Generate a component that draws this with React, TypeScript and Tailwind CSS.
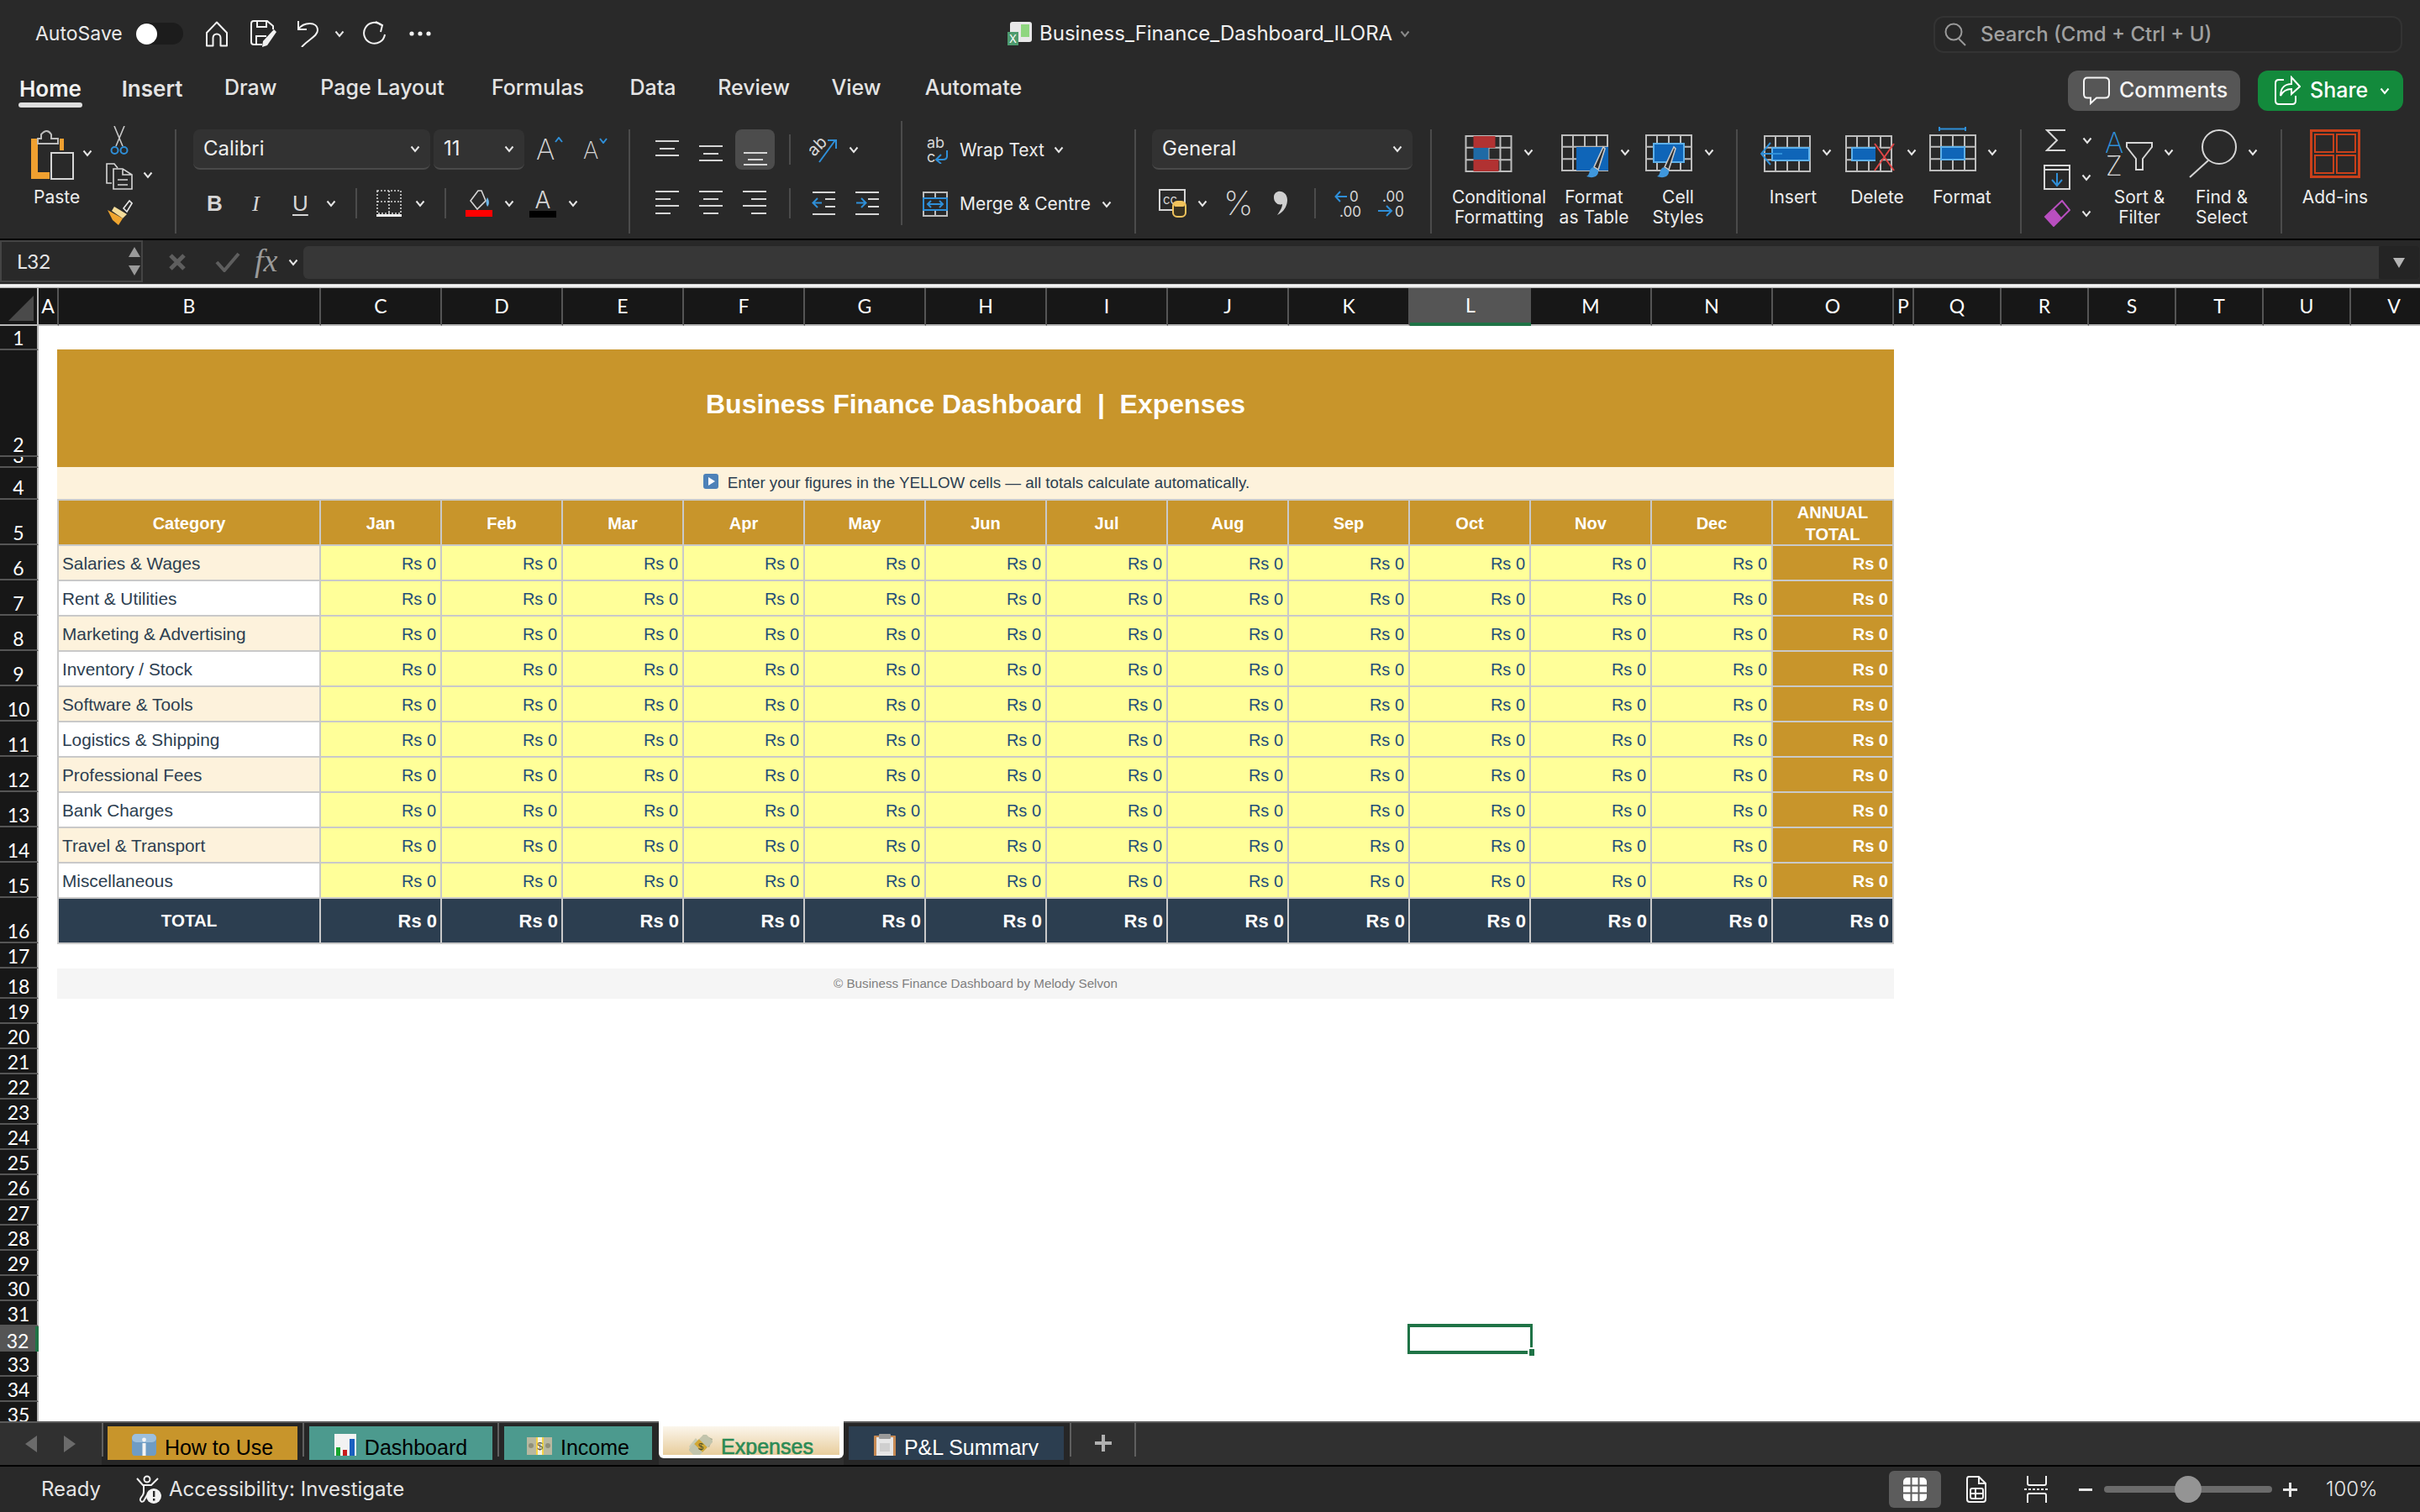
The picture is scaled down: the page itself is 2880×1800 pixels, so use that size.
import React from "react"

// ─── DATA ────────────────────────────────────────────────

const MONTHS = ["Jan", "Feb", "Mar", "Apr", "May", "Jun", "Jul", "Aug", "Sep", "Oct", "Nov", "Dec"]

const CATEGORIES = [
  "Salaries & Wages",
  "Rent & Utilities",
  "Marketing & Advertising",
  "Inventory / Stock",
  "Software & Tools",
  "Logistics & Shipping",
  "Professional Fees",
  "Bank Charges",
  "Travel & Transport",
  "Miscellaneous",
]

const LINE = "#d6d6d6"
const BLUE = "#2f8fd8"

// ─── SMALL PIECES ────────────────────────────────────────

function Chev({ className = "", color = "#e6e6e6" }: { className?: string; color?: string }) {
  return (
    <svg width="12" height="9" viewBox="0 0 12 9" className={"shrink-0 " + className}>
      <path d="M1.5 1.5 L6 7 L10.5 1.5" fill="none" stroke={color} strokeWidth="2" />
    </svg>
  )
}

function Sep({ className = "" }: { className?: string }) {
  return <div className={"w-[2px] h-[124px] shrink-0 bg-[#4b4b4b] " + className} />
}

function MiniSep({ className = "" }: { className?: string }) {
  return <div className={"w-[2px] h-[36px] shrink-0 bg-[#4b4b4b] " + className} />
}

function Lines({ ys, ws, align, className = "" }: { ys: number[]; ws: number[]; align: "l" | "c" | "r"; className?: string }) {
  return (
    <svg width="28" height="38" viewBox="0 0 28 38" className={"shrink-0 " + className}>
      {ys.map((y, i) => {
        const x = align === "l" ? 0 : align === "r" ? 28 - ws[i] : (28 - ws[i]) / 2
        return <rect key={i} x={x} y={y} width={ws[i]} height="2" fill={LINE} />
      })}
    </svg>
  )
}

function Grid({ w = 56, h = 44, rows = 3, cols = 4, color = "#bdbdbd" }: { w?: number; h?: number; rows?: number; cols?: number; color?: string }) {
  const lines = []
  for (let i = 1; i < cols; i++) lines.push(<line key={"c" + i} x1={(w / cols) * i} y1="1" x2={(w / cols) * i} y2={h - 1} stroke={color} strokeWidth="2" />)
  for (let i = 1; i < rows; i++) lines.push(<line key={"r" + i} x1="1" y1={(h / rows) * i} x2={w - 1} y2={(h / rows) * i} stroke={color} strokeWidth="2" />)
  return (
    <g>
      <rect x="1" y="1" width={w - 2} height={h - 2} fill="none" stroke={color} strokeWidth="2" />
      {lines}
    </g>
  )
}

function Brush({ x, y }: { x: number; y: number }) {
  return (
    <g transform={`translate(${x} ${y})`}>
      <path d="M20 1 L9 25 L14 28 L22 3 Z" fill="#2b2b2b" stroke="#c9c9c9" strokeWidth="1.6" />
      <path d="M8 25 C2 27 5 34 0 36 C8 39 15 36 14 29 Z" fill="#3f97dc" />
    </g>
  )
}

// Big ribbon button: icon + chevron on top, label below
function BigBtn({ className, pad, icon, l1, l2, chev = true }: { className: string; pad: string; icon: React.ReactNode; l1: string; l2?: string; chev?: boolean }) {
  return (
    <div className={"flex flex-col shrink-0 " + className}>
      <div className={"flex items-center h-[69px] " + pad}>
        {icon}
        {chev && <Chev className="ml-[13px] -mt-[14px]" />}
      </div>
      <div className="text-center text-[21px] leading-[24px] text-[#ededed] whitespace-nowrap">
        <div>{l1}</div>
        {l2 && <div>{l2}</div>}
      </div>
    </div>
  )
}

function SheetTab({ className, text, icon, bg }: { className: string; text: string; icon: React.ReactNode; bg: string }) {
  return (
    <div className={"h-[40px] mt-[4px] shrink-0 " + className + " " + bg}>
      <div className="h-[35px] overflow-hidden flex justify-center gap-[10px] pt-[11px]">
        {icon}
        <span className="text-[25px] leading-[28px] font-[family-name:'Liberation_Sans',Arial,sans-serif] whitespace-nowrap">{text}</span>
      </div>
    </div>
  )
}

// ─── TOP BARS ────────────────────────────────────────────

function TitleBar() {
  return (
    <div className="h-[80px] flex items-center shrink-0 text-[#e9e9e9]">
      <span className="ml-[42px] w-[100px] text-[23px] whitespace-nowrap">AutoSave</span>
      <div className="ml-[20px] w-[56px] h-[26px] rounded-full bg-[#1c1c1c] flex items-center">
        <div className="w-[25px] h-[25px] rounded-full bg-white" />
      </div>
      <svg width="28" height="31" viewBox="0 0 28 31" className="ml-[26px] shrink-0">
        <path d="M2 14 L14 1.5 L26 14 V29.5 H18.5 V20 a4.5 4.5 0 0 0 -9 0 V29.5 H2 Z" fill="none" stroke="#f2f2f2" strokeWidth="2" strokeLinejoin="round" />
      </svg>
      <svg width="32" height="32" viewBox="0 0 32 32" className="ml-[26px] shrink-0">
        <path d="M14 29 H4 Q1 29 1 26 V4 Q1 1 4 1 H20 L27 7 V11" fill="none" stroke="#f2f2f2" strokeWidth="2" />
        <path d="M8 1 V8 H19 V1 M7 29 V19 H19" fill="none" stroke="#f2f2f2" strokeWidth="2" />
        <path d="M28 11 L31 14 L20 30 L14 32 L15 25 Z" fill="#f2f2f2" />
      </svg>
      <svg width="27" height="32" viewBox="0 0 27 32" className="ml-[23px] shrink-0">
        <path d="M2 1 V11 H12 M2 11 C8 2 25 1 25 12 C25 19 14 23 6 32" fill="none" stroke="#f2f2f2" strokeWidth="2" />
      </svg>
      <Chev className="ml-[18px]" />
      <svg width="28" height="30" viewBox="0 0 28 30" className="ml-[22px] shrink-0">
        <path d="M22 5 A12.5 12.5 0 1 0 26 16" fill="none" stroke="#f2f2f2" strokeWidth="2" />
        <path d="M15 1 L23 5 L21 13" fill="none" stroke="#f2f2f2" strokeWidth="2" />
      </svg>
      <svg width="26" height="6" viewBox="0 0 26 6" className="ml-[27px] shrink-0">
        <circle cx="3" cy="3" r="2.6" fill="#f2f2f2" />
        <circle cx="13" cy="3" r="2.6" fill="#f2f2f2" />
        <circle cx="23" cy="3" r="2.6" fill="#f2f2f2" />
      </svg>
      {/* Document title */}
      <div className="ml-[686px] w-[29px] h-[28px] relative shrink-0">
        <div className="absolute left-[3px] top-0 w-[26px] h-[24px] rounded-[3px] bg-[#e8e8e8]">
          <div className="ml-[13px] mt-[3px] w-[10px] h-[15px] bg-[#8fd67f]" />
        </div>
        <div className="absolute left-0 bottom-0 w-[13px] h-[16px] bg-[#4e9a6e] text-white text-[13px] leading-[16px] text-center">X</div>
      </div>
      <span className="ml-[9px] w-[421px] text-[24px] whitespace-nowrap text-[#f0f0f0]">Business_Finance_Dashboard_ILORA</span>
      <Chev className="ml-[8px]" color="#8a8a8a" />
      {/* Search */}
      <div className="ml-[623px] mt-[2px] w-[558px] h-[44px] rounded-[12px] border-2 border-[#333333] bg-[#272727] flex items-center shrink-0">
        <svg width="28" height="30" viewBox="0 0 28 30" className="ml-[11px] shrink-0">
          <circle cx="11" cy="12" r="9.5" fill="none" stroke="#9a9a9a" strokeWidth="2" />
          <path d="M17 20 L25 28" stroke="#9a9a9a" strokeWidth="2" />
        </svg>
        <span className="ml-[15px] text-[24px] font-medium text-[#a0a0a0] whitespace-nowrap">Search (Cmd + Ctrl + U)</span>
      </div>
    </div>
  )
}

function TabsBar() {
  const tab = "shrink-0 text-center text-[25px] font-medium text-[#e4e4e4] whitespace-nowrap mb-[6px]"
  return (
    <div className="h-[56px] flex items-center shrink-0">
      <div className="relative ml-[22px] w-[76px] shrink-0 text-center text-[26px] font-semibold text-[#f2f2f2] mb-[6px]">
        Home
        <div className="absolute left-0 right-0 top-[36px] h-[6px] rounded-full bg-[#dedede]" />
      </div>
      <span className="ml-[45px] w-[76px] shrink-0 text-center text-[26px] font-semibold text-[#e4e4e4] whitespace-nowrap mb-[6px]">Insert</span>
      <span className={"ml-[48px] w-[62px] " + tab}>Draw</span>
      <span className={"ml-[50px] w-[152px] " + tab}>Page Layout</span>
      <span className={"ml-[52px] w-[114px] " + tab}>Formulas</span>
      <span className={"ml-[52px] w-[56px] " + tab}>Data</span>
      <span className={"ml-[48px] w-[88px] " + tab}>Review</span>
      <span className={"ml-[48px] w-[60px] " + tab}>View</span>
      <span className={"ml-[50px] w-[119px] " + tab}>Automate</span>
      <div className="ml-[1243px] w-[205px] h-[48px] rounded-[12px] bg-[#565656] flex items-center shrink-0">
        <svg width="34" height="34" viewBox="0 0 34 34" className="ml-[17px] shrink-0">
          <path d="M6 1.5 H27 Q32 1.5 32 6 V21 Q32 25.5 27 25.5 H17 L10 32 V25.5 H6 Q2 25.5 2 21 V6 Q2 1.5 6 1.5 Z" fill="none" stroke="#f4f4f4" strokeWidth="2" />
        </svg>
        <span className="ml-[10px] text-[25px] font-medium text-[#f4f4f4] whitespace-nowrap">Comments</span>
      </div>
      <div className="ml-[21px] w-[173px] h-[48px] rounded-[12px] bg-[#138a3c] flex items-center shrink-0">
        <svg width="32" height="36" viewBox="0 0 32 36" className="ml-[19px] shrink-0">
          <path d="M12 5 H6 Q2 5 2 9 V30 Q2 34 6 34 H22 Q26 34 26 30 V24" fill="none" stroke="#fff" strokeWidth="2" />
          <path d="M8 24 C8 14 14 10 21 10 V2 L31 13 L21 22 V16 C15 16 11 18 8 24 Z" fill="none" stroke="#fff" strokeWidth="2" />
        </svg>
        <span className="ml-[11px] text-[25px] font-medium text-white">Share</span>
        <Chev className="ml-[14px]" color="#ffffff" />
      </div>
    </div>
  )
}

// ─── RIBBON ──────────────────────────────────────────────

function ClipboardGroup() {
  return (
    <div className="w-[208px] shrink-0 flex">
      <div className="ml-[35px] w-[80px] shrink-0">
        <div className="flex items-center h-[62px]">
          <svg width="53" height="60" viewBox="0 0 53 60" className="shrink-0">
            <path d="M2 10 H10 V50 H24 V58 H2 Z" fill="#f0a030" />
            <path d="M10 10 H14 V5 Q21 -3 26 5 V10 H34 V16 H10 Z" fill="#292929" stroke="#bdbdbd" strokeWidth="2" />
            <path d="M36 10 H41 V24 H36 Z" fill="#f0a030" />
            <rect x="26" y="27" width="26" height="31" fill="#292929" stroke="#d6d6d6" strokeWidth="2" />
          </svg>
          <Chev className="ml-[10px] -mt-[6px]" />
        </div>
        <div className="ml-[5px] mt-[6px] text-[21px] leading-[26px] text-[#ededed]">Paste</div>
      </div>
      <div className="ml-[11px] shrink-0 flex flex-col">
        <svg width="24" height="34" viewBox="0 0 24 34" className="-mt-[4px] ml-[4px]">
          <path d="M6 0 L16 24 M18 0 L8 24" stroke="#c9c9c9" strokeWidth="1.6" />
          <circle cx="6.5" cy="29" r="4" fill="none" stroke={BLUE} strokeWidth="2" />
          <circle cx="17.5" cy="29" r="4" fill="none" stroke={BLUE} strokeWidth="2" />
        </svg>
        <div className="flex items-center mt-[10px] h-[32px]">
          <svg width="32" height="32" viewBox="0 0 32 32" className="shrink-0">
            <path d="M7 24 H1 V1 H10 L14 6" fill="none" stroke="#d6d6d6" strokeWidth="1.6" />
            <path d="M9 7 H20 L31 14 V31 H9 Z M20 8 V14 H30 M14 20 H26 M14 26 H26" fill="#292929" stroke="#d6d6d6" strokeWidth="1.6" />
          </svg>
          <Chev className="ml-[12px] -mt-[4px]" />
        </div>
        <svg width="32" height="30" viewBox="0 0 32 30" className="mt-[12px]">
          <path d="M21 10 L28 1 L31 4 L25 14 Z" fill="#292929" stroke="#e8e8e8" strokeWidth="1.6" />
          <path d="M10 8 L25 17 L20 22 L7 13 Z" fill="#f4dc9a" />
          <path d="M2 12 L20 22 L15 30 L8 24 Z" fill="#efa530" />
        </svg>
      </div>
    </div>
  )
}

function FontGroup() {
  return (
    <div className="w-[538px] shrink-0">
      <div className="flex items-center h-[48px]">
        <div className="ml-[20px] w-[282px] h-[48px] rounded-[8px] bg-[#323232] border-b-2 border-[#4a4a4a] flex items-center justify-between px-[12px]">
          <span className="text-[24px] text-[#ededed]">Calibri</span>
          <Chev />
        </div>
        <div className="ml-[4px] w-[108px] h-[48px] rounded-[8px] bg-[#323232] border-b-2 border-[#4a4a4a] flex items-center justify-between px-[12px]">
          <span className="text-[24px] text-[#ededed]">11</span>
          <Chev />
        </div>
        <div className="ml-[14px] w-[30px] h-[34px] flex items-start relative">
          <span className="text-[34px] leading-[34px] font-extralight text-[#d6d6d6]">A</span>
          <svg width="10" height="7" viewBox="0 0 10 7" className="absolute -right-[2px] top-[2px]"><path d="M1 6 L5 1 L9 6" fill="none" stroke={BLUE} strokeWidth="2" /></svg>
        </div>
        <div className="ml-[26px] w-[26px] h-[32px] flex items-start relative">
          <span className="text-[28px] leading-[34px] font-extralight text-[#d6d6d6]">A</span>
          <svg width="10" height="7" viewBox="0 0 10 7" className="absolute -right-[3px] top-[2px]"><path d="M1 1 L5 6 L9 1" fill="none" stroke={BLUE} strokeWidth="2" /></svg>
        </div>
      </div>
      <div className="flex items-center h-[48px] mt-[16px] text-[#d6d6d6]">
        <span className="ml-[36px] w-[16px] text-[26px] font-bold font-[family-name:'Liberation_Sans',sans-serif]">B</span>
        <span className="ml-[38px] w-[12px] text-[26px] italic font-[family-name:'Liberation_Serif',serif]">I</span>
        <span className="ml-[36px] w-[18px] text-[26px] underline underline-offset-[4px] font-[family-name:'Liberation_Sans',sans-serif]">U</span>
        <Chev className="ml-[22px]" />
        <MiniSep className="ml-[23px]" />
        <svg width="30" height="32" viewBox="0 0 30 32" className="ml-[23px] shrink-0">
          <rect x="1" y="1" width="28" height="27" fill="none" stroke="#d6d6d6" strokeWidth="1.6" strokeDasharray="2 2" />
          <path d="M15 1 V28 M1 14 H29" stroke="#d6d6d6" strokeWidth="1.6" strokeDasharray="2 2" />
          <rect x="0" y="29" width="30" height="3" fill="#f2f2f2" />
        </svg>
        <Chev className="ml-[16px]" />
        <MiniSep className="ml-[23px]" />
        <div className="ml-[23px] w-[32px] shrink-0 flex flex-col items-center">
          <svg width="26" height="24" viewBox="0 0 26 24">
            <path d="M12 1 L16 1 L21 13 L11 23 L3 13 Z" fill="none" stroke="#d6d6d6" strokeWidth="1.6" />
            <path d="M23 9 C26 14 25 18 23 20 C21 17 21 12 23 9 Z" fill="#6cb6ea" />
          </svg>
          <div className="w-[32px] h-[8px] bg-[#ff0000]" />
        </div>
        <Chev className="ml-[14px]" />
        <div className="ml-[18px] w-[32px] shrink-0 flex flex-col items-center">
          <span className="text-[28px] leading-[26px] font-light text-[#d6d6d6]">A</span>
          <div className="w-[32px] h-[8px] bg-black" />
        </div>
        <Chev className="ml-[14px]" />
      </div>
    </div>
  )
}

function AlignGroup() {
  return (
    <div className="w-[322px] shrink-0">
      <div className="flex items-center h-[48px]">
        <Lines className="ml-[30px]" ys={[8, 17, 25]} ws={[28, 18, 28]} align="c" />
        <Lines className="ml-[24px]" ys={[14, 23, 31]} ws={[28, 18, 28]} align="c" />
        <div className="ml-[15px] w-[47px] h-[48px] rounded-[8px] bg-[#4c4c4c] flex items-center justify-center">
          <Lines ys={[22, 30, 36]} ws={[28, 18, 28]} align="c" />
        </div>
        <MiniSep className="ml-[17px]" />
        <svg width="34" height="34" viewBox="0 0 34 34" className="ml-[22px] shrink-0">
          <text x="0" y="20" transform="rotate(-45 10 16)" fontSize="20" fill="#d6d6d6" fontFamily="Inter, sans-serif">ab</text>
          <path d="M12 32 L31 6 M22 6 H32 V16" fill="none" stroke={BLUE} strokeWidth="2" />
        </svg>
        <Chev className="ml-[13px]" />
      </div>
      <div className="flex items-center h-[48px] mt-[16px]">
        <Lines className="ml-[30px]" ys={[4, 13, 21, 30]} ws={[28, 18, 28, 18]} align="l" />
        <Lines className="ml-[24px]" ys={[4, 13, 21, 30]} ws={[28, 18, 28, 18]} align="c" />
        <Lines className="ml-[24px]" ys={[4, 13, 21, 30]} ws={[28, 18, 28, 18]} align="r" />
        <MiniSep className="ml-[27px]" />
        <svg width="29" height="32" viewBox="0 0 29 32" className="ml-[25px] shrink-0">
          <path d="M1 3 H28 M16 11 H28 M16 20 H28 M1 29 H28" stroke={LINE} strokeWidth="2" />
          <path d="M12 15.5 H2 M7 10 L1.5 15.5 L7 21" fill="none" stroke={BLUE} strokeWidth="2" />
        </svg>
        <svg width="28" height="32" viewBox="0 0 28 32" className="ml-[23px] shrink-0">
          <path d="M0 3 H28 M15 11 H28 M15 20 H28 M0 29 H28" stroke={LINE} strokeWidth="2" />
          <path d="M1 15.5 H12 M7 10 L12.5 15.5 L7 21" fill="none" stroke={BLUE} strokeWidth="2" />
        </svg>
      </div>
    </div>
  )
}

function WrapGroup() {
  return (
    <div className="w-[276px] shrink-0">
      <div className="flex items-center h-[48px] pt-[1px]">
        <svg width="27" height="32" viewBox="0 0 27 32" className="ml-[29px] shrink-0">
          <text x="0" y="13" fontSize="18" fill="#d6d6d6" fontFamily="Inter, sans-serif">ab</text>
          <text x="0" y="30" fontSize="18" fill="#d6d6d6" fontFamily="Inter, sans-serif">c</text>
          <path d="M24 16 V23 Q24 27 19 27 H12 M17 21 L11 27 L17 32" fill="none" stroke={BLUE} strokeWidth="2" />
        </svg>
        <span className="ml-[12px] w-[101px] text-[21px] text-[#ededed] whitespace-nowrap">Wrap Text</span>
        <Chev className="ml-[11px]" />
      </div>
      <div className="flex items-center h-[48px] mt-[17px]">
        <svg width="30" height="30" viewBox="0 0 30 30" className="ml-[24px] shrink-0">
          <rect x="1" y="1" width="28" height="28" fill="none" stroke="#bdbdbd" strokeWidth="2" />
          <path d="M15 1 V8 M15 22 V29" stroke="#bdbdbd" strokeWidth="2" />
          <rect x="1" y="8" width="28" height="14" fill="#292929" stroke={BLUE} strokeWidth="2" />
          <path d="M6 15 H24 M10 11 L6 15 L10 19 M20 11 L24 15 L20 19" fill="none" stroke={BLUE} strokeWidth="2" />
        </svg>
        <span className="ml-[14px] w-[158px] text-[21px] text-[#ededed] whitespace-nowrap">Merge &amp; Centre</span>
        <Chev className="ml-[11px]" />
      </div>
    </div>
  )
}

function NumberGroup() {
  return (
    <div className="w-[350px] shrink-0">
      <div className="ml-[19px] w-[310px] h-[48px] rounded-[8px] bg-[#323232] border-b-2 border-[#4a4a4a] flex items-center justify-between px-[12px]">
        <span className="text-[24px] text-[#ededed]">General</span>
        <Chev />
      </div>
      <div className="flex items-center h-[48px] mt-[16px]">
        <svg width="33" height="34" viewBox="0 0 33 34" className="ml-[27px] shrink-0">
          <rect x="1" y="1" width="30" height="24" fill="none" stroke="#d6d6d6" strokeWidth="2" />
          <text x="5" y="18" fontSize="15" fill="#d6d6d6" fontFamily="Inter, sans-serif">cc</text>
          <rect x="17" y="15" width="15" height="18" rx="5" fill="#3a3220" stroke="#f2c35c" strokeWidth="2" />
          <rect x="18" y="16" width="13" height="5" rx="2" fill="#f2c35c" />
        </svg>
        <Chev className="ml-[13px]" />
        <span className="ml-[19px] w-[30px] text-[40px] leading-[44px] font-extralight text-[#d6d6d6]">%</span>
        <svg width="18" height="30" viewBox="0 0 18 30" className="ml-[29px] shrink-0">
          <path d="M6 1 C12 0 17 4 17 11 C17 19 12 26 5 29 C9 23 11 20 11 16 C6 18 1 14 1 8 C1 4 3 2 6 1 Z" fill="#cfcfcf" />
        </svg>
        <MiniSep className="ml-[31px]" />
        <svg width="32" height="34" viewBox="0 0 32 34" className="ml-[22px] shrink-0">
          <text x="18" y="15" fontSize="17" fill="#d6d6d6" fontFamily="Inter, sans-serif">0</text>
          <text x="6" y="33" fontSize="17" fill="#d6d6d6" fontFamily="Inter, sans-serif">.00</text>
          <path d="M15 9 H2 M7 3 L1.5 9 L7 15" fill="none" stroke={BLUE} strokeWidth="2" />
        </svg>
        <svg width="32" height="34" viewBox="0 0 32 34" className="ml-[20px] shrink-0">
          <text x="5" y="15" fontSize="17" fill="#d6d6d6" fontFamily="Inter, sans-serif">.00</text>
          <text x="20" y="33" fontSize="17" fill="#d6d6d6" fontFamily="Inter, sans-serif">0</text>
          <path d="M0 26 H15 M10 20 L16 26 L10 32" fill="none" stroke={BLUE} strokeWidth="2" />
        </svg>
      </div>
    </div>
  )
}

function StylesGroup() {
  return (
    <div className="w-[362px] shrink-0 flex pl-[20px]">
      <BigBtn
        className="w-[120px]"
        pad="ml-[19px]"
        l1="Conditional"
        l2="Formatting"
        icon={
          <svg width="57" height="44" viewBox="0 0 56 44" className="shrink-0 -mt-[12px]">
            <Grid />
            <rect x="10" y="1" width="26" height="14" fill="#b13232" />
            <rect x="10" y="15" width="18" height="14" fill="#1f6aa5" />
            <rect x="10" y="29" width="30" height="14" fill="#b13232" />
          </svg>
        }
      />
      <BigBtn
        className="w-[106px]"
        pad="ml-[14px]"
        l1="Format"
        l2="as Table"
        icon={
          <svg width="57" height="54" viewBox="0 0 57 54" className="shrink-0 -mt-[3px]">
            <Grid />
            <rect x="18" y="15" width="38" height="28" fill="#0f65b8" />
            <Brush x={30} y={14} />
          </svg>
        }
      />
      <BigBtn
        className="w-[94px]"
        pad="ml-[8px]"
        l1="Cell"
        l2="Styles"
        icon={
          <svg width="57" height="54" viewBox="0 0 57 54" className="shrink-0 -mt-[3px]">
            <Grid />
            <rect x="10" y="11" width="36" height="22" fill="#0f65b8" stroke="#5db0ea" strokeWidth="2" />
            <Brush x={14} y={14} />
          </svg>
        }
      />
    </div>
  )
}

function CellsGroup() {
  return (
    <div className="w-[336px] shrink-0 flex pl-[16px]">
      <BigBtn
        className="w-[100px]"
        pad="ml-[11px]"
        l1="Insert"
        icon={
          <svg width="60" height="44" viewBox="0 0 60 44" className="shrink-0 -mt-[12px]">
            <g transform="translate(4 0)"><Grid /></g>
            <rect x="14" y="15" width="44" height="15" fill="#0f65b8" stroke="#5db0ea" strokeWidth="2" />
            <path d="M26 22 H2 M12 9 L1 22 L12 35" fill="none" stroke={BLUE} strokeWidth="2" />
          </svg>
        }
      />
      <BigBtn
        className="w-[100px]"
        pad="ml-[12px]"
        l1="Delete"
        icon={
          <svg width="60" height="44" viewBox="0 0 60 44" className="shrink-0 -mt-[12px]">
            <Grid />
            <rect x="8" y="15" width="30" height="15" fill="#0f65b8" stroke="#5db0ea" strokeWidth="2" />
            <path d="M36 11 L50 22 L36 35 Z" fill="#292929" />
            <path d="M35 10 L58 42 M58 10 L35 42" stroke="#e04646" strokeWidth="2" />
          </svg>
        }
      />
      <BigBtn
        className="w-[102px]"
        pad="ml-[12px]"
        l1="Format"
        icon={
          <svg width="56" height="54" viewBox="0 0 56 54" className="shrink-0 -mt-[23px]">
            <path d="M12 1 V6 M43 1 V6 M12 3.5 H43" stroke={BLUE} strokeWidth="2" fill="none" />
            <g transform="translate(0 10)">
              <Grid />
              <rect x="14" y="15" width="28" height="15" fill="#0f65b8" stroke="#5db0ea" strokeWidth="2" />
            </g>
          </svg>
        }
      />
    </div>
  )
}

function EditGroup() {
  return (
    <div className="w-[308px] shrink-0 flex pl-[26px]">
      <div className="w-[64px] shrink-0 flex flex-col">
        <div className="flex items-center h-[30px] -mt-[2px]">
          <svg width="28" height="28" viewBox="0 0 28 28" className="ml-[2px] shrink-0">
            <path d="M24 2 H2 L14 14 L2 26 H24" fill="none" stroke="#d6d6d6" strokeWidth="2" />
          </svg>
          <Chev className="ml-[16px]" />
        </div>
        <div className="flex items-center h-[30px] mt-[14px]">
          <svg width="32" height="30" viewBox="0 0 32 30" className="shrink-0">
            <rect x="1" y="1" width="30" height="28" fill="none" stroke="#d6d6d6" strokeWidth="2" />
            <path d="M1 6 H31" stroke="#d6d6d6" strokeWidth="2" />
            <path d="M16 10 V24 M10 18 L16 25 L22 18" fill="none" stroke={BLUE} strokeWidth="2" />
          </svg>
          <Chev className="ml-[13px]" />
        </div>
        <div className="flex items-center h-[32px] mt-[12px]">
          <svg width="32" height="32" viewBox="0 0 32 32" className="shrink-0">
            <path d="M22 1 L31 12 L12 31 L2 20 Z" fill="none" stroke="#b94fc0" strokeWidth="2" />
            <path d="M13 11 L22 22 L12 31 L2 20 Z" fill="#b94fc0" />
          </svg>
          <Chev className="ml-[13px]" />
        </div>
      </div>
      <BigBtn
        className="w-[100px]"
        pad="ml-[10px]"
        l1="Sort &"
        l2="Filter"
        icon={
          <svg width="56" height="56" viewBox="0 0 56 56" className="shrink-0 -mt-[8px]">
            <text x="-1" y="25" fontSize="34" fontWeight="200" fill={BLUE} fontFamily="Inter, sans-serif">A</text>
            <text x="0" y="52" fontSize="32" fontWeight="200" fill="#d6d6d6" fontFamily="Inter, sans-serif">Z</text>
            <path d="M25 13 H55 V18 L44 32 V45 H36 V32 L25 18 Z" fill="none" stroke="#d6d6d6" strokeWidth="2" />
          </svg>
        }
      />
      <BigBtn
        className="w-[96px]"
        pad="ml-[8px]"
        l1="Find &"
        l2="Select"
        icon={
          <svg width="58" height="58" viewBox="0 0 58 58" className="shrink-0 -mt-[11px]">
            <ellipse cx="37" cy="21" rx="20" ry="20" fill="none" stroke="#d6d6d6" strokeWidth="2" />
            <path d="M24 37 L2 57" stroke="#d6d6d6" strokeWidth="2" />
          </svg>
        }
      />
    </div>
  )
}

function Ribbon() {
  return (
    <div className="h-[148px] pt-[18px] flex shrink-0 text-[#ededed]">
      <ClipboardGroup />
      <Sep />
      <FontGroup />
      <Sep />
      <AlignGroup />
      <Sep className="-mt-[10px]" />
      <WrapGroup />
      <Sep />
      <NumberGroup />
      <Sep />
      <StylesGroup />
      <Sep />
      <CellsGroup />
      <Sep />
      <EditGroup />
      <Sep />
      <div className="pl-[20px] flex">
        <BigBtn
          className="w-[86px]"
          pad="ml-[13px]"
          l1="Add-ins"
          chev={false}
          icon={
            <svg width="60" height="58" viewBox="0 0 60 58" className="shrink-0 -mt-[12px]">
              <rect x="1.5" y="1.5" width="57" height="55" fill="none" stroke="#c9401a" strokeWidth="3" />
              <rect x="6" y="6" width="22" height="21" fill="none" stroke="#c9401a" strokeWidth="2" />
              <rect x="32" y="6" width="22" height="21" fill="none" stroke="#c9401a" strokeWidth="2" />
              <rect x="6" y="31" width="22" height="21" fill="none" stroke="#c9401a" strokeWidth="2" />
              <rect x="32" y="31" width="22" height="21" fill="none" stroke="#c9401a" strokeWidth="2" />
            </svg>
          }
        />
      </div>
    </div>
  )
}

function FormulaBar() {
  return (
    <div className="h-[52px] flex shrink-0 bg-[#282828]">
      <div className="w-[170px] h-[50px] shrink-0 border-2 border-[#444444] flex items-center justify-between pl-[18px] pr-[1px] bg-[#292929]">
        <span className="text-[24px] text-[#e6e6e6] font-[family-name:Lato,sans-serif]">L32</span>
        <div className="flex flex-col gap-[10px]">
          <div className="w-0 h-0 border-x-[7px] border-x-transparent border-b-[12px] border-b-[#9a9a9a]" />
          <div className="w-0 h-0 border-x-[7px] border-x-transparent border-t-[12px] border-t-[#9a9a9a]" />
        </div>
      </div>
      <svg width="22" height="22" viewBox="0 0 22 22" className="ml-[30px] mt-[15px] shrink-0">
        <path d="M3 3 L19 19 M19 3 L3 19" stroke="#5e5e5e" strokeWidth="5" />
      </svg>
      <svg width="30" height="24" viewBox="0 0 30 24" className="ml-[34px] mt-[14px] shrink-0">
        <path d="M2 12 L11 22 L28 2" fill="none" stroke="#5e5e5e" strokeWidth="4" />
      </svg>
      <span className="ml-[17px] mt-[3px] w-[30px] text-[38px] leading-[42px] italic text-[#9a9a9a] font-[family-name:'Liberation_Serif',serif]">fx</span>
      <Chev className="ml-[10px] mt-[22px]" />
      <div className="ml-[6px] mt-[7px] w-[2470px] h-[39px] rounded-l-[6px] bg-[#373737] shrink-0" />
      <div className="w-[48px] h-[39px] mt-[7px] shrink-0 rounded-[4px] bg-[#242424] flex items-center justify-center">
        <div className="w-0 h-0 border-x-[7px] border-x-transparent border-t-[12px] border-t-[#b5b5b5]" />
      </div>
    </div>
  )
}

// ─── SHEET ───────────────────────────────────────────────

function ColumnHeaders() {
  const head = "h-[45px] shrink-0 border-r-2 border-r-[#555555] border-b-2 border-b-[#b8b8b8] bg-[#171717] flex items-center justify-center text-[23px] text-white font-[family-name:Lato,sans-serif]"
  const month = "w-[144px] " + head
  const wide = "w-[104px] " + head
  return (
    <div className="h-[45px] flex shrink-0 overflow-hidden">
      <div className="w-[46px] h-[45px] shrink-0 bg-[#171717] border-r-2 border-r-[#b8b8b8] border-b-2 border-b-[#b8b8b8] flex items-end justify-end pr-[4px] pb-[4px]">
        <div className="w-0 h-0 border-l-[30px] border-l-transparent border-b-[30px] border-b-[#4a4a4a]" />
      </div>
      <div className={"w-[24px] " + head}>A</div>
      <div className={"w-[312px] " + head}>B</div>
      {["C", "D", "E", "F", "G", "H", "I", "J", "K"].map((c) => (
        <div key={c} className={month}>{c}</div>
      ))}
      <div className="w-[144px] h-[45px] shrink-0 bg-[#555555] border-b-4 border-b-[#1f7346] flex items-center justify-center text-[23px] text-white font-[family-name:Lato,sans-serif]">L</div>
      {["M", "N", "O"].map((c) => (
        <div key={c} className={month}>{c}</div>
      ))}
      <div className={"w-[24px] " + head}>P</div>
      {["Q", "R", "S", "T", "U", "V"].map((c) => (
        <div key={c} className={wide}>{c}</div>
      ))}
    </div>
  )
}

function RowHeaders() {
  const base = "shrink-0 w-[46px] border-r-2 border-r-[#b8b8b8] border-b-2 border-b-[#555555] bg-[#171717] flex items-end justify-center overflow-hidden text-[23px] leading-[26px] text-white font-[family-name:Lato,sans-serif]"
  const heights: [number, string][] = [
    [1, "h-[29px]"],
    [2, "h-[127px]"],
    [3, "h-[13px]"],
    [4, "h-[38px]"],
    [5, "h-[54px]"],
    [16, "h-[54px]"],
    [17, "h-[30px]"],
    [18, "h-[36px]"],
  ]
  const rows: React.ReactNode[] = []
  for (let n = 1; n <= 35; n++) {
    const custom = heights.find(([r]) => r === n)
    const h = custom ? custom[1] : n >= 6 && n <= 15 ? "h-[42px]" : "h-[30px]"
    if (n === 32) {
      rows.push(
        <div key={n} className={"shrink-0 w-[46px] h-[30px] bg-[#555555] border-r-4 border-r-[#1f7346] flex items-end justify-center overflow-hidden text-[23px] leading-[26px] text-white font-[family-name:Lato,sans-serif]"}>
          {n}
        </div>
      )
    } else {
      rows.push(<div key={n} className={h + " " + base}>{n}</div>)
    }
  }
  return <div className="w-[46px] shrink-0 flex flex-col overflow-hidden">{rows}</div>
}

function Table() {
  const sheetFont = "font-[family-name:'Liberation_Sans',Arial,sans-serif]"
  const headCell = "bg-[#c8952b] text-white font-bold text-[20px] leading-[26px] flex items-center justify-center text-center pt-[1px]"
  return (
    <div className={"w-[2186px] grid grid-cols-[310px_repeat(13,142px)] grid-rows-[52px_repeat(10,40px)_52px] gap-[2px] p-[2px] bg-[#c9c9c9] " + sheetFont}>
      <div className={headCell}>Category</div>
      {MONTHS.map((m) => (
        <div key={m} className={headCell}>{m}</div>
      ))}
      <div className={headCell}>
        ANNUAL
        <br />
        TOTAL
      </div>
      {CATEGORIES.map((cat, i) => (
        <React.Fragment key={cat}>
          <div className={(i % 2 === 0 ? "bg-[#fdf2dc]" : "bg-white") + " text-[20.8px] text-[#2c3e50] flex items-center pl-[4px] pt-[2px]"}>{cat}</div>
          {MONTHS.map((m) => (
            <div key={m} className="bg-[#ffff99] text-[20px] text-[#1f4e79] flex items-center justify-end pr-[5px] pt-[2px]">Rs 0</div>
          ))}
          <div className="bg-[#c8952b] text-[20px] font-bold text-white flex items-center justify-end pr-[5px] pt-[2px]">Rs 0</div>
        </React.Fragment>
      ))}
      <div className="bg-[#2c3e50] text-white font-bold text-[20.5px] flex items-center justify-center">TOTAL</div>
      {[...MONTHS, "total"].map((m) => (
        <div key={m} className="bg-[#2c3e50] text-white font-bold text-[22px] flex items-center justify-end pr-[4px]">Rs 0</div>
      ))}
    </div>
  )
}

function Canvas() {
  const sheetFont = "font-[family-name:'Liberation_Sans',Arial,sans-serif]"
  return (
    <div className={"relative flex-1 bg-white pl-[22px] pt-[28px] overflow-hidden " + sheetFont}>
      <div className="w-[2186px] h-[140px] bg-[#c8952b] flex items-center justify-center pb-[10px] text-[32px] font-bold text-white whitespace-pre">
        {"Business Finance Dashboard  |  Expenses"}
      </div>
      <div className="w-[2186px] h-[38px] bg-[#fdf2dc] flex items-center justify-center pl-[2px] text-[18.8px] text-[#2c3e50]">
        <svg width="18" height="18" viewBox="0 0 18 18" className="mr-[11px] -mt-[4px] shrink-0">
          <rect x="0" y="0" width="18" height="18" rx="3" fill="#4d82b8" />
          <path d="M6 4 L14 9 L6 14 Z" fill="#ffffff" />
        </svg>
        <span className="whitespace-nowrap pt-[1px]">Enter your figures in the YELLOW cells — all totals calculate automatically.</span>
      </div>
      <Table />
      <div className="w-[2186px] h-[36px] mt-[29px] bg-[#f5f5f5] flex items-center justify-center text-[15.2px] text-[#7f7f7f]">
        © Business Finance Dashboard by Melody Selvon
      </div>
      {/* Active cell L32 */}
      <div className="absolute left-[1629px] top-[1188px] w-[149px] h-[36px] border-y-4 border-x-[3px] border-[#1f7346]">
        <div className="absolute -right-[5px] -bottom-[6px] w-[8px] h-[10px] bg-[#1f7346] border-l-2 border-t-2 border-white" />
      </div>
    </div>
  )
}

// ─── BOTTOM BARS ─────────────────────────────────────────

function TabIconInfo() {
  return (
    <svg width="29" height="27" viewBox="0 0 29 27" className="shrink-0 -mt-[2px]">
      <rect x="0" y="0" width="29" height="27" rx="5" fill="#6f9cc4" />
      <rect x="0" y="0" width="29" height="10" rx="5" fill="#9dbfdc" />
      <circle cx="14.5" cy="7" r="2.4" fill="#f4f4f4" />
      <rect x="12.5" y="11" width="4" height="15" fill="#f4f4f4" />
    </svg>
  )
}

function TabIconChart() {
  return (
    <svg width="26" height="27" viewBox="0 0 26 27" className="shrink-0 -mt-[2px]">
      <rect x="0" y="0" width="26" height="27" fill="#f2f2f2" />
      <rect x="2" y="16" width="5" height="11" fill="#17a52d" />
      <rect x="10" y="19" width="5" height="8" fill="#c81c1c" />
      <rect x="18" y="6" width="6" height="21" fill="#1a5fc0" />
    </svg>
  )
}

function TabIconMoney() {
  return (
    <svg width="30" height="21" viewBox="0 0 30 21" className="shrink-0 mt-[2px]">
      <rect x="0" y="0" width="30" height="21" fill="#b8b8a0" />
      <circle cx="5" cy="10" r="3" fill="#8f8f78" />
      <circle cx="25" cy="10" r="3" fill="#8f8f78" />
      <rect x="11" y="0" width="9" height="21" fill="#f4d445" />
      <rect x="13" y="0" width="5" height="21" fill="#f6f2e0" />
      <text x="15.5" y="15" fontSize="12" textAnchor="middle" fill="#5a5a3a" fontFamily="Liberation Sans, sans-serif">$</text>
    </svg>
  )
}

function TabIconWings() {
  return (
    <svg width="28" height="26" viewBox="0 0 28 26" className="shrink-0">
      <path d="M5 24 L0 14 L8 4 L16 14 Z" fill="#c8cbb4" />
      <path d="M17 0 L28 5 L24 15 L13 10 Z" fill="#a9ac92" />
      <g transform="rotate(-45 14 13)">
        <rect x="0" y="6" width="28" height="14" fill="#c2c4ac" />
        <rect x="10" y="6" width="8" height="14" fill="#d2a835" />
      </g>
      <text x="14" y="18" fontSize="11" textAnchor="middle" fill="#4a4a2a" fontFamily="Liberation Sans, sans-serif">$</text>
    </svg>
  )
}

function TabIconClip() {
  return (
    <svg width="26" height="27" viewBox="0 0 26 27" className="shrink-0 -mt-[2px]">
      <rect x="0" y="2" width="26" height="25" rx="1" fill="#c68a54" />
      <rect x="3" y="4" width="20" height="23" fill="#e6e6e6" />
      <rect x="6" y="0" width="14" height="6" rx="1" fill="#9a9a9a" />
      <rect x="7" y="11" width="12" height="10" fill="#cfcfcf" />
    </svg>
  )
}

function TabBar() {
  return (
    <div className="h-[52px] flex shrink-0 bg-[#303030]">
      <div className="w-[121px] shrink-0 border-t-2 border-[#5a5a5a] flex items-center">
        <div className="ml-[30px] w-0 h-0 border-y-[10px] border-y-transparent border-r-[14px] border-r-[#6b6b6b]" />
        <div className="ml-[32px] w-0 h-0 border-y-[10px] border-y-transparent border-l-[14px] border-l-[#6b6b6b]" />
      </div>
      <div className="w-[663px] shrink-0 flex border-t-2 border-[#5a5a5a] bg-[#262626] text-black">
        <div className="w-[2px] h-[40px] bg-[#5f5f5f] shrink-0" />
        <SheetTab className="ml-[5px] w-[226px]" bg="bg-[#c8952b]" text="How to Use" icon={<TabIconInfo />} />
        <div className="ml-[6px] w-[2px] h-[40px] bg-[#5f5f5f] shrink-0" />
        <SheetTab className="ml-[6px] w-[218px]" bg="bg-[#4c9a8e]" text="Dashboard" icon={<TabIconChart />} />
        <div className="ml-[6px] w-[2px] h-[40px] bg-[#5f5f5f] shrink-0" />
        <SheetTab className="ml-[6px] w-[176px]" bg="bg-[#4c9a8e]" text="Income" icon={<TabIconMoney />} />
      </div>
      {/* Active tab */}
      <div className="w-[220px] h-[44px] shrink-0 bg-white rounded-b-[6px] px-[5px] pt-[6px]">
        <div className="h-[34px] bg-gradient-to-b from-[#fbf6ec] to-[#e8cd9c] overflow-hidden flex justify-center gap-[10px] pt-[10px] text-[#2a8a55]">
          <TabIconWings />
          <span className="text-[25px] leading-[28px] [-webkit-text-stroke:0.6px_#2a8a55] font-[family-name:'Liberation_Sans',Arial,sans-serif] whitespace-nowrap">Expenses</span>
        </div>
      </div>
      <div className="w-[269px] shrink-0 flex border-t-2 border-[#5a5a5a] bg-[#262626] text-white">
        <SheetTab className="ml-[6px] w-[256px]" bg="bg-[#2c3e50]" text="P&L Summary" icon={<TabIconClip />} />
      </div>
      <div className="flex-1 flex border-t-2 border-[#5a5a5a]">
        <div className="w-[2px] h-[40px] bg-[#5f5f5f] shrink-0" />
        <svg width="20" height="20" viewBox="0 0 20 20" className="ml-[28px] mt-[14px] shrink-0">
          <path d="M10 0 V20 M0 10 H20" stroke="#b0b0b0" strokeWidth="4" />
        </svg>
        <div className="ml-[27px] w-[2px] h-[40px] bg-[#5f5f5f] shrink-0" />
      </div>
    </div>
  )
}

function StatusBar() {
  return (
    <div className="h-[54px] flex items-center shrink-0 bg-[#292929] text-[24px] text-[#e6e6e6]">
      <span className="ml-[49px] w-[68px] whitespace-nowrap">Ready</span>
      <svg width="30" height="34" viewBox="0 0 30 34" className="ml-[45px] shrink-0">
        <circle cx="13" cy="5" r="3.5" fill="none" stroke="#f2f2f2" strokeWidth="2" />
        <path d="M1 4 L8 12 H18 L26 4 M9 12 V20 C9 26 4 26 5 30 Q6 33 9 31 L13 24" fill="none" stroke="#f2f2f2" strokeWidth="2" />
        <circle cx="21" cy="25" r="9" fill="#f2f2f2" />
        <rect x="20" y="19" width="2.4" height="7" fill="#292929" />
        <rect x="20" y="28" width="2.4" height="2.6" fill="#292929" />
      </svg>
      <span className="ml-[9px] w-[277px] whitespace-nowrap">Accessibility: Investigate</span>
      <div className="ml-[1770px] w-[62px] h-[44px] rounded-[6px] bg-[#5c5c5c] flex items-center justify-center shrink-0">
        <svg width="28" height="28" viewBox="0 0 28 28">
          <rect x="0" y="0" width="28" height="28" rx="5" fill="#ffffff" />
          <path d="M9.5 0 V28 M18.5 0 V28 M0 9.5 H28 M0 18.5 H28" stroke="#5c5c5c" strokeWidth="2" />
        </svg>
      </div>
      <svg width="24" height="32" viewBox="0 0 24 32" className="ml-[30px] shrink-0">
        <path d="M3 1 H15 L23 9 V28 Q23 31 20 31 H4 Q1 31 1 28 V4 Q1 1 3 1 Z M15 1 V9 H23" fill="none" stroke="#f2f2f2" strokeWidth="2" />
        <rect x="5" y="15" width="15" height="12" rx="2" fill="none" stroke="#f2f2f2" strokeWidth="2" />
        <path d="M11 15 V27 M5 21 H20" stroke="#f2f2f2" strokeWidth="2" />
      </svg>
      <svg width="30" height="32" viewBox="0 0 30 32" className="ml-[45px] shrink-0">
        <path d="M4 0 V9 Q4 11 6 11 H24 Q26 11 26 9 V0 M4 32 V23 Q4 21 6 21 H24 Q26 21 26 23 V32" fill="none" stroke="#f2f2f2" strokeWidth="2" />
        <path d="M0 16 H30" stroke="#f2f2f2" strokeWidth="2" strokeDasharray="3 2" />
      </svg>
      <div className="ml-[35px] w-[16px] h-[3px] bg-[#e6e6e6] shrink-0" />
      <div className="ml-[14px] w-[200px] h-[8px] rounded-full bg-[#6b6b6b] flex items-center shrink-0">
        <div className="ml-[84px] w-[32px] h-[32px] rounded-full bg-[#949494]" />
      </div>
      <span className="ml-[13px] w-[17px] h-[17px] shrink-0 relative">
        <span className="absolute left-0 top-[7px] w-[17px] h-[3px] bg-[#e6e6e6]" />
        <span className="absolute left-[7px] top-0 w-[3px] h-[17px] bg-[#e6e6e6]" />
      </span>
      <span className="ml-[34px] text-[24px] font-light whitespace-nowrap">100%</span>
    </div>
  )
}

// ─── APP ─────────────────────────────────────────────────

export default function App() {
  return (
    <div className="w-[2880px] h-[1800px] flex flex-col overflow-hidden bg-[#292929] font-[family-name:Inter,sans-serif]">
      <TitleBar />
      <TabsBar />
      <Ribbon />
      <div className="h-[2px] bg-black shrink-0" />
      <FormulaBar />
      <div className="h-[5px] shrink-0 bg-gradient-to-b from-[#cfcfcf] via-white to-[#aaaaaa]" />
      <ColumnHeaders />
      <div className="flex-1 min-h-0 flex overflow-hidden">
        <RowHeaders />
        <Canvas />
      </div>
      <TabBar />
      <div className="h-[2px] bg-black shrink-0" />
      <StatusBar />
    </div>
  )
}
